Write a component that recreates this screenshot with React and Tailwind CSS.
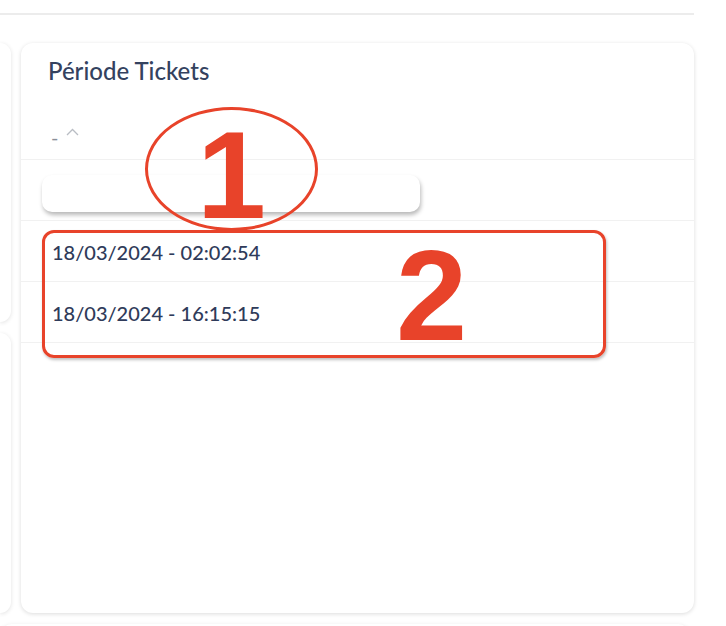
import React from 'react';

const rows = ['18/03/2024 - 02:02:54', '18/03/2024 - 16:15:15'];

const App = () => {
  return (
    <div className="relative w-[726px] h-[626px] overflow-hidden bg-white font-['Lato','Liberation_Sans',sans-serif]">
      {/* top rule */}
      <div className="h-[15px] w-[694px] border-b-2 border-[#ececec]" />

      <div className="flex gap-[10px] pt-[28px]">
        {/* left column, mostly off-screen */}
        <div className="flex w-[11px] flex-col gap-[11px]">
          <div className="h-[279px] rounded-r-xl bg-white shadow-[0_1px_4px_rgba(0,0,0,0.12)]" />
          <div className="h-[280px] rounded-r-xl bg-white shadow-[0_1px_4px_rgba(0,0,0,0.12)]" />
        </div>

        <div className="flex flex-col">
          {/* main card */}
          <div className="h-[570px] w-[673px] rounded-xl bg-white shadow-[0_1px_4px_rgba(0,0,0,0.14)]">
            <div className="h-[61px] px-[27px] pt-[14px]">
              <h2 className="text-[24px] leading-[28px] font-medium text-[#34425f]">Période Tickets</h2>
            </div>
            <div className="flex h-[56px] items-start gap-[8px] border-b border-[#f1f1f1] px-[30px] pt-[21px]">
              <span className="text-[20px] leading-[24px] text-[#8a8f99]">-</span>
              <svg width="13" height="8" viewBox="0 0 13 8" className="mt-[3px]">
                <path d="M1 7 L6.5 1.5 L12 7" fill="none" stroke="#b9bdc4" strokeWidth="1.3" />
              </svg>
            </div>
            <div className="h-[61px] border-b border-[#f1f1f1] px-[21px] pt-[15px]">
              <button className="h-[37px] w-[378px] rounded-[10px] bg-white shadow-[1px_3px_4px_rgba(0,0,0,0.28)]" />
            </div>
            {rows.map((r) => (
              <div key={r} className="flex h-[61px] items-center border-b border-[#f1f1f1] px-[31px] pt-[1px]">
                <span className="text-[20px] font-medium text-[#2f3b5a]">{r}</span>
              </div>
            ))}
          </div>
          {/* next card below */}
          <div className="mt-[11px] h-[40px] w-[690px] -ml-[21px] rounded-t-xl bg-white shadow-[0_1px_4px_rgba(0,0,0,0.1)]" />
        </div>
      </div>

      {/* annotation 1 */}
      <div className="absolute left-[145px] top-[107px] flex h-[124px] w-[173px] items-center justify-center rounded-[50%] border-[3px] border-[#e8432a]">
        <span className="mt-[12px] text-[124px] font-bold leading-none text-[#e8432a] font-['Liberation_Sans',sans-serif]">1</span>
      </div>

      {/* annotation 2 */}
      <div className="absolute left-[42px] top-[230px] h-[128px] w-[564px] rounded-[12px] border-[3px] border-[#e8432a] shadow-[1px_2px_3px_rgba(0,0,0,0.25)]">
        <span className="absolute left-[351px] -top-[1px] text-[128px] font-bold leading-none text-[#e8432a] font-['Liberation_Sans',sans-serif]">2</span>
      </div>
    </div>
  );
};

export default App;
